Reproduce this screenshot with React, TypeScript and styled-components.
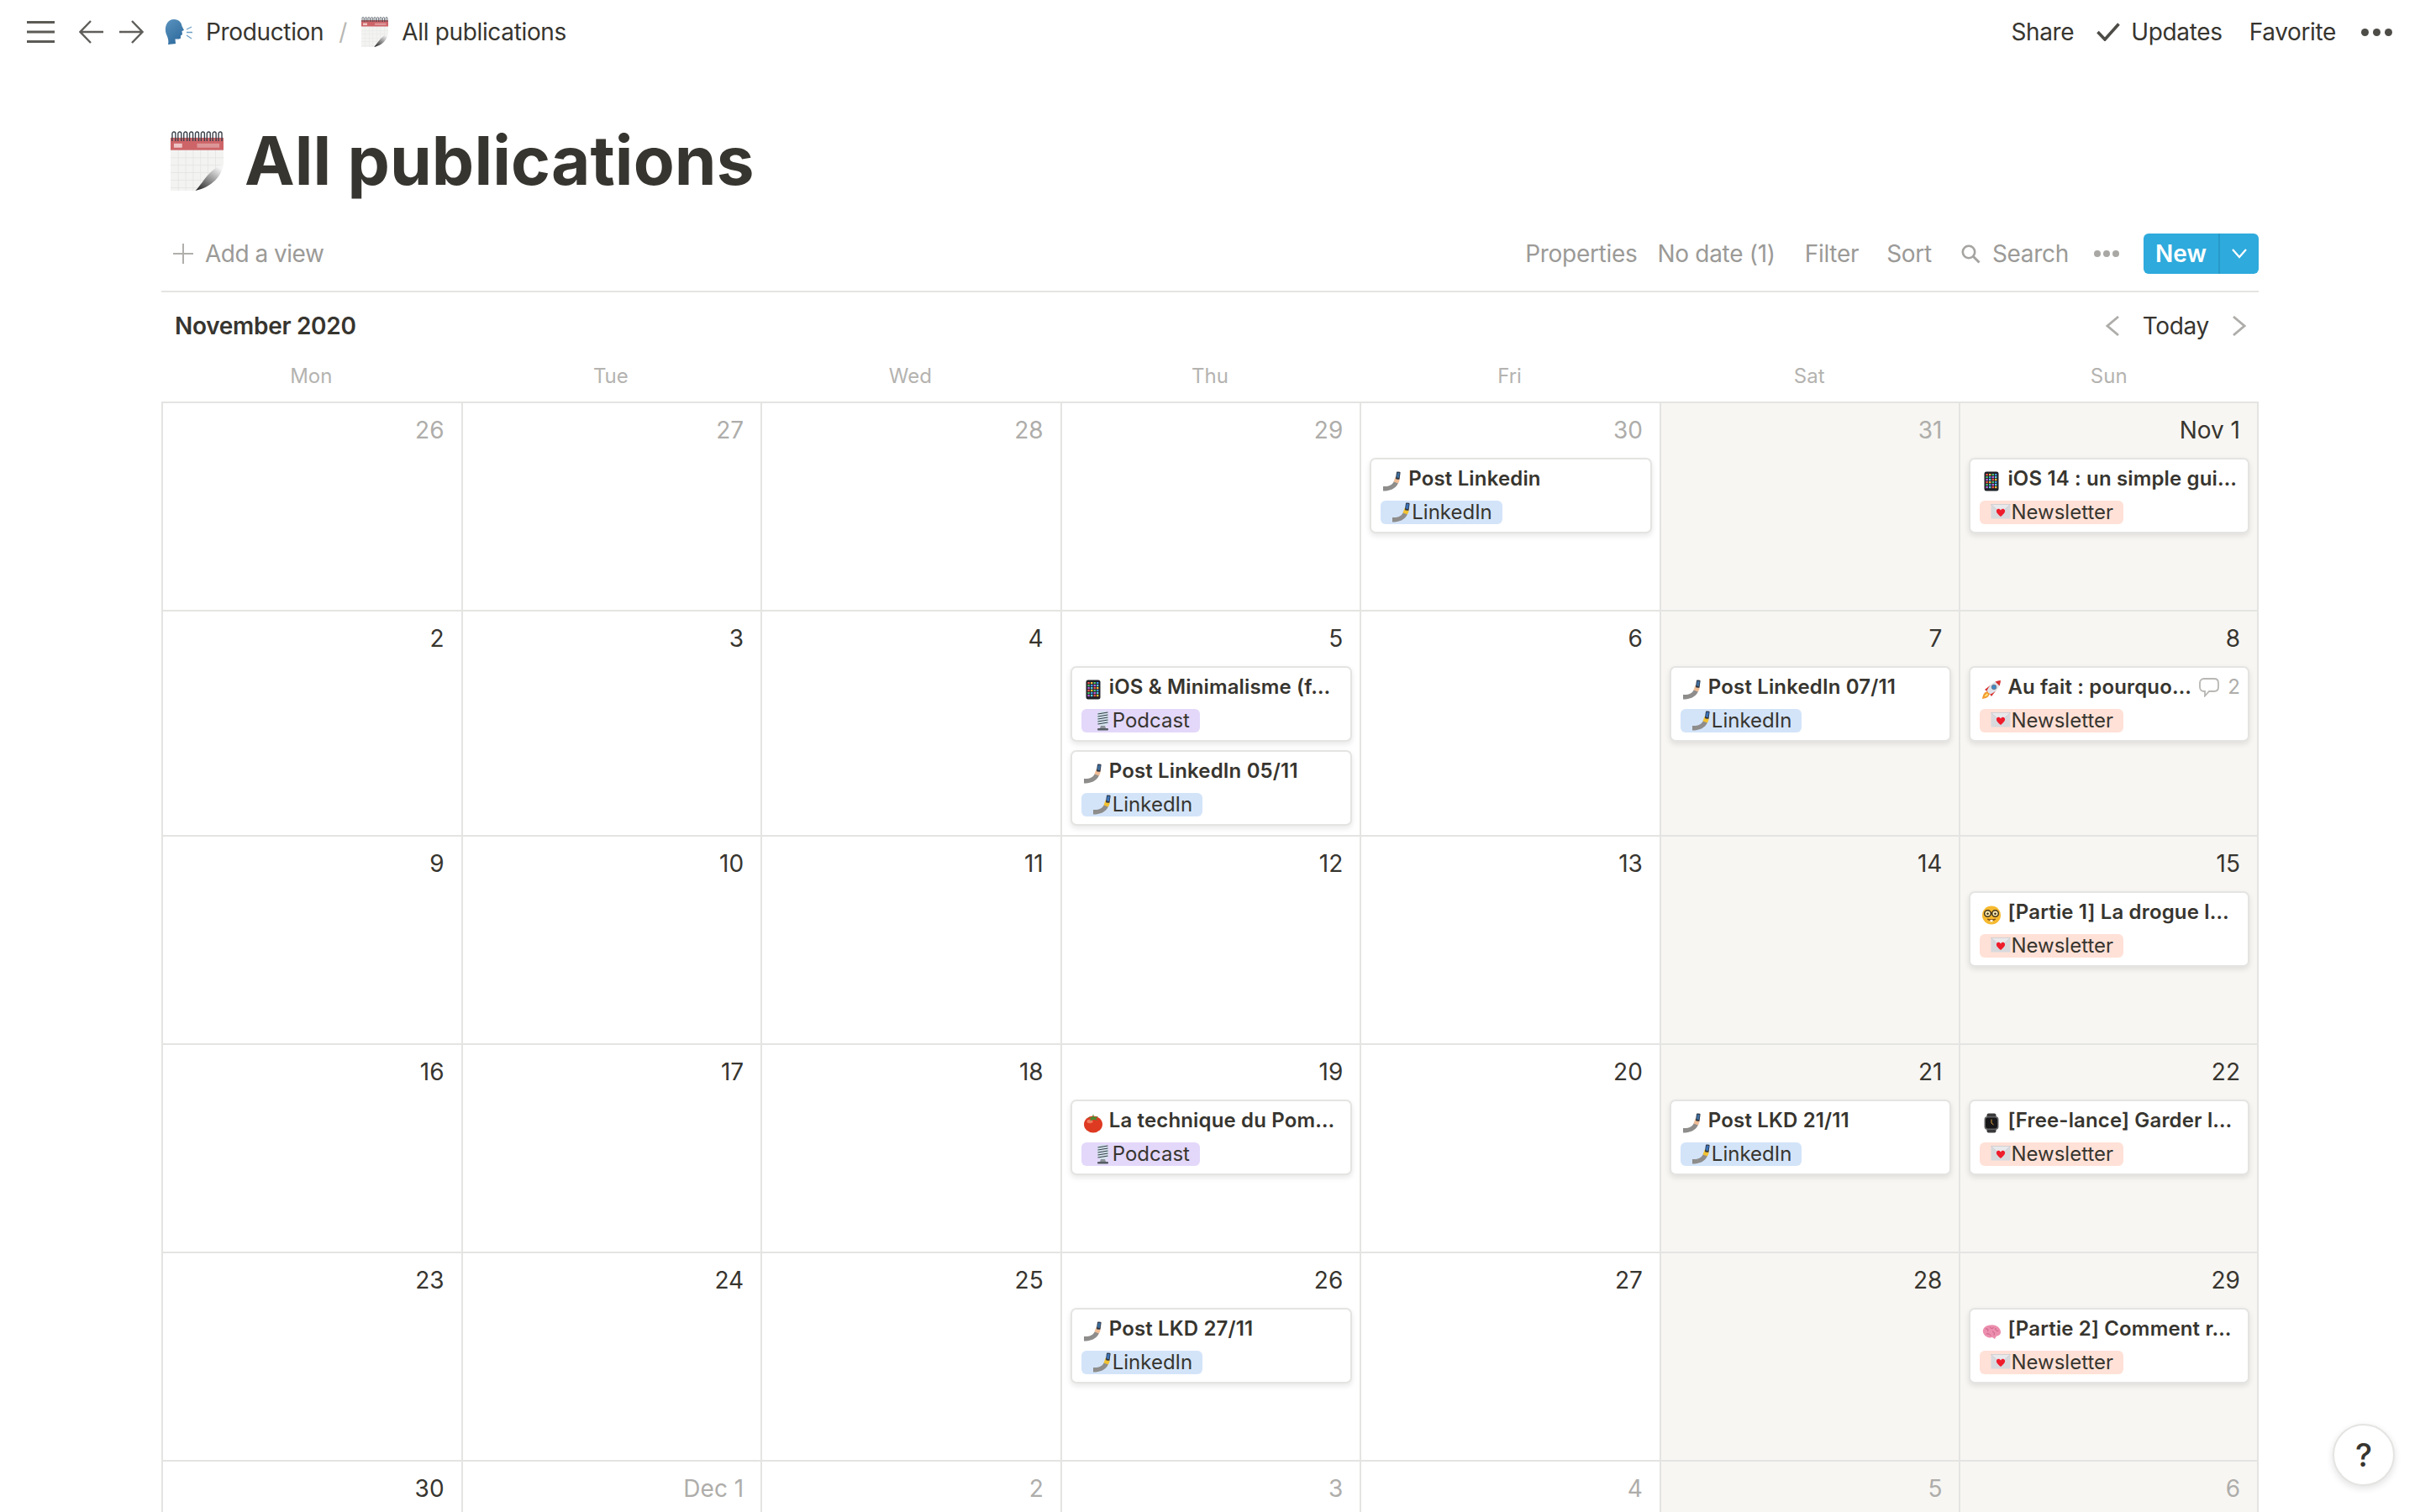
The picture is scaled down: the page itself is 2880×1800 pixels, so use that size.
import React from 'react'
import styled, { createGlobalStyle } from 'styled-components'

const GlobalStyle = createGlobalStyle`
  html, body {
    margin: 0;
    padding: 0;
    background: #fff;
    overflow: hidden;
  }
  body {
    font-family: Inter, "Liberation Sans", sans-serif;
    color: #37352f;
  }
`

// emoji drawings, the reference uses Apple emoji and no colour emoji font is installed
const CalendarEmoji: React.FC<{ width: number; height: number }> = ({ width, height }) => (
  <svg width={width} height={height} viewBox="0 0 64 72" style={{ flex: 'none' }}>
    <defs>
      <linearGradient id="curl" x1="0.1" y1="1" x2="0.8" y2="0.1">
        <stop offset="0" stopColor="#262626" />
        <stop offset="0.55" stopColor="#9a9a9a" />
        <stop offset="1" stopColor="#f4f4f4" />
      </linearGradient>
    </defs>
    <rect x="0" y="22" width="64" height="50" fill="#f3f3f2" />
    {[32, 41, 50, 59, 68].map((y) => (
      <rect key={y} x="0" y={y} width="64" height="0.7" fill="#e2e2e1" />
    ))}
    {[9, 18, 27, 36, 45, 54].map((x) => (
      <rect key={x} x={x} y="22" width="0.7" height="50" fill="#e2e2e1" />
    ))}
    <rect x="0" y="8" width="64" height="15" fill="#cd6468" />
    <rect x="4" y="15" width="10" height="5" fill="#eec5c6" />
    <rect x="32" y="15" width="27" height="5" fill="#dc9698" />
    {[4, 11, 18, 25, 32, 39, 46, 53, 60].map((x) => (
      <path key={x} d={`M${x - 2} 12 V3 a2 2 0 0 1 4 0 V12`} fill="none" stroke="#38404a" strokeWidth="1.4" />
    ))}
    <path d="M64 72 H30 C46 66 54 52 64 40 Z" fill="#fff" />
    <path d="M30 72 C40 62 46 46 64 40 C62 54 50 68 30 72 Z" fill="url(#curl)" />
  </svg>
)

const SpeakingHead = () => (
  <svg width={34} height={30} viewBox="0 0 34 30" style={{ flex: 'none' }}>
    <defs>
      <linearGradient id="head" x1="0" y1="0" x2="0.6" y2="1">
        <stop offset="0" stopColor="#5b93bf" />
        <stop offset="1" stopColor="#2f6c9e" />
      </linearGradient>
    </defs>
    <path
      d="M11 0 C17 0 20 4 20.5 8 L23 13 L20.5 14 L21 18 L19 19.5 L19 22.5 C17 24 14 23.5 12.5 23.5 L13 29 L4 30 C5 26 4 22 2 18 C-1 11 2 0 11 0 Z"
      fill="url(#head)"
    />
    <path d="M26 12 L32 9 M26 15.5 L33 15.5 M26 19 L32 23" stroke="#6d9fc6" strokeWidth="1.3" fill="none" />
  </svg>
)

const Phone = () => (
  <svg width={24} height={24} viewBox="0 0 24 24">
    <rect x="3.5" y="0.5" width="17" height="23" rx="2.5" fill="#1f2126" />
    {[3, 6, 9, 12, 15, 18].map((y, r) =>
      [5.4, 9, 12.6, 16].map((x, c) => (
        <rect
          key={`${r}-${c}`}
          x={x}
          y={y}
          width="2.4"
          height="2.2"
          fill={['#f0554e', '#f5bd3f', '#4cc474', '#4196ea', '#bd62e0', '#5accdf'][(r * 2 + c) % 6]}
        />
      )),
    )}
  </svg>
)

const SelfieArm: React.FC<{ hand?: string; phone?: string }> = ({ hand = '#eebc95', phone = '#3f6f9e' }) => (
  <svg width={24} height={24} viewBox="0 0 24 24">
    <path d="M1 23.5 V18 C6 18 11 18 14 12 L19 14 C16 21 9 23.5 1 23.5 Z" fill="#8e8d8b" />
    <path d="M13.5 12.5 L15.5 7 L17 6 L20.5 7.5 L20.5 11 L19 14.5 Z" fill={hand} />
    <rect x="16.5" y="0.5" width="4.6" height="9" rx="1" transform="rotate(8 18 5)" fill="#2d3340" />
    <rect x="17.3" y="1.6" width="3" height="6" transform="rotate(8 18 5)" fill={phone} />
  </svg>
)

const Mic = () => (
  <svg width={24} height={24} viewBox="0 0 24 24">
    <rect x="6" y="0.5" width="13" height="18" rx="5.5" fill="#d3e2ec" />
    {[3, 6, 9, 12, 15].map((y) => (
      <path key={y} d={`M6.5 ${y + 1} L18.5 ${y - 1}`} stroke="#39424c" strokeWidth="1.2" />
    ))}
    <path d="M10 18 H15 L16 21 H9 Z" fill="#8b9298" />
    <rect x="6" y="21" width="13" height="2.4" rx="1" fill="#555c62" />
  </svg>
)

const HeartMail = () => (
  <svg width={24} height={24} viewBox="0 0 24 24">
    <rect x="0.5" y="2.5" width="23" height="17" fill="#d8d9dd" />
    <path d="M0.5 2.5 L12 13 L23.5 2.5 Z" fill="#e9e9ec" stroke="#c2c3c8" strokeWidth="0.6" />
    <path
      d="M12 17 C6.5 12.5 6.5 10.5 7.3 9 C8.5 7 11 7.5 12 9.5 C13 7.5 15.5 7 16.7 9 C17.5 10.5 17.5 12.5 12 17 Z"
      fill="#ef1c2c"
    />
  </svg>
)

const Rocket = () => (
  <svg width={24} height={24} viewBox="0 0 24 24">
    <path d="M1 23 C1.5 18 3.5 15 7 14 L10 17 C9 20.5 6 22.5 1 23 Z" fill="#f2992e" />
    <path d="M3.5 20.5 C4 18.5 5.5 17 7 16.5 L8 17.5 C7.5 19 6 20 3.5 20.5 Z" fill="#ffe27a" />
    <path d="M4 12 L11 6.5 L8 15 Z M12 20 L17.5 13 L9 16 Z" fill="#d8312e" />
    <path d="M6.5 13.5 C9 7 14.5 1.8 23 1 C22.4 9.5 17 15 10.5 17.5 Z" fill="#dfe4ea" />
    <path d="M16.5 2.4 C18.8 1.6 21 1.2 23 1 C22.8 3 22.4 5.2 21.6 7.4 Z" fill="#d8312e" />
    <circle cx="15" cy="9" r="2.8" fill="#3f88c5" stroke="#76808c" strokeWidth="1" />
  </svg>
)

const Nerd = () => (
  <svg width={24} height={24} viewBox="0 0 24 24">
    <circle cx="12" cy="12.5" r="11" fill="#f6b92f" />
    <circle cx="7.5" cy="10.5" r="3.8" fill="#fdeeb6" stroke="#43331a" strokeWidth="1.5" />
    <circle cx="16.5" cy="10.5" r="3.8" fill="#fdeeb6" stroke="#43331a" strokeWidth="1.5" />
    <path d="M11 10 H13" stroke="#43331a" strokeWidth="1.5" />
    <circle cx="7.5" cy="10.8" r="1.3" fill="#3a2a12" />
    <circle cx="16.5" cy="10.8" r="1.3" fill="#3a2a12" />
    <path d="M7 17 C9 19.5 15 19.5 17 17 C14 18 10 18 7 17 Z" fill="#7a4a16" stroke="#7a4a16" strokeWidth="0.8" />
    <rect x="10.5" y="18" width="3" height="2.4" fill="#fff" />
  </svg>
)

const Watch = () => (
  <svg width={24} height={24} viewBox="0 0 24 24">
    <rect x="6.5" y="0.5" width="11" height="23" rx="2" fill="#3a3a3c" />
    <rect x="3.5" y="4" width="17" height="16" rx="4" fill="#626264" />
    <rect x="5" y="5.4" width="14" height="13.2" rx="3" fill="#17171a" />
    <path d="M12 7.5 V12 L14.5 14" stroke="#d89a3c" strokeWidth="1" fill="none" />
  </svg>
)

const Tomato = () => (
  <svg width={24} height={24} viewBox="0 0 24 24">
    <ellipse cx="12" cy="13.5" rx="11" ry="10" fill="#de3a22" />
    <ellipse cx="8" cy="10" rx="3.5" ry="2.2" fill="#f07a5e" />
    <path d="M12 1 L13 5 L18 4 L15 7 L17.5 9 L12.5 7.8 L8 9.5 L9.5 6.5 L5.5 5 L11 5 Z" fill="#4c8c33" />
  </svg>
)

const Brain = () => (
  <svg width={24} height={24} viewBox="0 0 24 24">
    <path
      d="M2 13 C1 8 6 4 11 4.5 C16 3.5 22 6.5 23 12 C23.5 15 21 17.5 18 17.5 L16 21 L13 19 C9 20.5 3.5 18.5 2 13 Z"
      fill="#ec8eae"
    />
    <path
      d="M5 9 C8 8 9 11 7 12 M10 6.5 C11 9 14 9 14.5 7 M17 8 C16 11 19 12 20.5 11 M6 15 C9 14 11 16 11 17.5 M13 12 C15 12 16 15 15 16.5"
      stroke="#c85f86"
      strokeWidth="1"
      fill="none"
    />
  </svg>
)

const MiniMenu = () => (
  <svg width={33} height={26} viewBox="0 0 33 26">
    <rect y="0" width="33" height="3" fill="#5c5b56" />
    <rect y="11.5" width="33" height="3" fill="#5c5b56" />
    <rect y="23" width="33" height="3" fill="#5c5b56" />
  </svg>
)

const ArrowIcon: React.FC<{ flip?: boolean }> = ({ flip }) => (
  <svg width={29} height={28} viewBox="0 0 29 28" style={flip ? { transform: 'scaleX(-1)' } : undefined}>
    <path d="M14 1 L1.5 14 L14 27 M2 14 H29" fill="none" stroke="#5f5e5a" strokeWidth="2.4" />
  </svg>
)

const PlusIcon = () => (
  <svg width={24} height={24} viewBox="0 0 24 24">
    <path d="M12 0 V24 M0 12 H24" stroke="#b0afac" strokeWidth="2" />
  </svg>
)

const SearchIcon = () => (
  <svg width={23} height={23} viewBox="0 0 23 23">
    <circle cx="9" cy="9" r="7.2" fill="none" stroke="#a5a4a1" strokeWidth="2.6" />
    <path d="M14 14 L21.5 21.5" stroke="#a5a4a1" strokeWidth="3" />
  </svg>
)

const CheckIcon = () => (
  <svg width={28} height={22} viewBox="0 0 28 22">
    <path d="M1.5 11 L10 20 L26.5 1.5" fill="none" stroke="#4d4c47" strokeWidth="3.6" />
  </svg>
)

const Dots: React.FC<{ wide: number; r: number; color: string }> = ({ wide, r, color }) => (
  <svg width={wide} height={r * 2} viewBox={`0 0 ${wide} ${r * 2}`}>
    <circle cx={r} cy={r} r={r} fill={color} />
    <circle cx={wide / 2} cy={r} r={r} fill={color} />
    <circle cx={wide - r} cy={r} r={r} fill={color} />
  </svg>
)

const Chevron: React.FC<{ flip?: boolean }> = ({ flip }) => (
  <svg width={16} height={24} viewBox="0 0 16 24" style={flip ? { transform: 'scaleX(-1)' } : undefined}>
    <path d="M15 1 L2 12 L15 23" fill="none" stroke="#aeadaa" strokeWidth="2.8" />
  </svg>
)

const CommentIcon = () => (
  <svg width={24} height={23} viewBox="0 0 24 23">
    <path
      d="M6 1 H18 C21 1 23 3 23 6 V11 C23 14 21 16 18 16 H12 L7 21.5 V16 H6 C3 16 1 14 1 11 V6 C1 3 3 1 6 1 Z"
      fill="none"
      stroke="#b8b7b4"
      strokeWidth="1.8"
    />
  </svg>
)

type TagKind = 'podcast' | 'linkedin' | 'newsletter'

interface Publication {
  icon: React.ReactNode
  title: string
  tag: TagKind
  comments?: number
}

interface Day {
  label: string
  muted?: boolean
  cards?: Publication[]
}

const tagInfo = {
  podcast: { label: 'Podcast', bg: '#e3d8fa', icon: <Mic /> },
  linkedin: { label: 'LinkedIn', bg: '#d3e4f9', icon: <SelfieArm hand="#f2c230" phone="#3a73b8" /> },
  newsletter: { label: 'Newsletter', bg: '#ffe1d7', icon: <HeartMail /> },
}

const weeks: Day[][] = [
  [
    { label: '26', muted: true },
    { label: '27', muted: true },
    { label: '28', muted: true },
    { label: '29', muted: true },
    { label: '30', muted: true, cards: [{ icon: <SelfieArm />, title: 'Post Linkedin', tag: 'linkedin' }] },
    { label: '31', muted: true },
    { label: 'Nov 1', cards: [{ icon: <Phone />, title: 'iOS 14 : un simple gui…', tag: 'newsletter' }] },
  ],
  [
    { label: '2' },
    { label: '3' },
    { label: '4' },
    {
      label: '5',
      cards: [
        { icon: <Phone />, title: 'iOS & Minimalisme (f…', tag: 'podcast' },
        { icon: <SelfieArm />, title: 'Post LinkedIn 05/11', tag: 'linkedin' },
      ],
    },
    { label: '6' },
    { label: '7', cards: [{ icon: <SelfieArm />, title: 'Post LinkedIn 07/11', tag: 'linkedin' }] },
    { label: '8', cards: [{ icon: <Rocket />, title: 'Au fait : pourquo…', tag: 'newsletter', comments: 2 }] },
  ],
  [
    { label: '9' },
    { label: '10' },
    { label: '11' },
    { label: '12' },
    { label: '13' },
    { label: '14' },
    { label: '15', cards: [{ icon: <Nerd />, title: '[Partie 1] La drogue l…', tag: 'newsletter' }] },
  ],
  [
    { label: '16' },
    { label: '17' },
    { label: '18' },
    { label: '19', cards: [{ icon: <Tomato />, title: 'La technique du Pom…', tag: 'podcast' }] },
    { label: '20' },
    { label: '21', cards: [{ icon: <SelfieArm />, title: 'Post LKD 21/11', tag: 'linkedin' }] },
    { label: '22', cards: [{ icon: <Watch />, title: '[Free-lance] Garder l…', tag: 'newsletter' }] },
  ],
  [
    { label: '23' },
    { label: '24' },
    { label: '25' },
    { label: '26', cards: [{ icon: <SelfieArm />, title: 'Post LKD 27/11', tag: 'linkedin' }] },
    { label: '27' },
    { label: '28' },
    { label: '29', cards: [{ icon: <Brain />, title: '[Partie 2] Comment r…', tag: 'newsletter' }] },
  ],
  [
    { label: '30' },
    { label: 'Dec 1', muted: true },
    { label: '2', muted: true },
    { label: '3', muted: true },
    { label: '4', muted: true },
    { label: '5', muted: true },
    { label: '6', muted: true },
  ],
]

const dayNames = ['Mon', 'Tue', 'Wed', 'Thu', 'Fri', 'Sat', 'Sun']

const App: React.FC = () => {
  return (
    <>
      <GlobalStyle />
      <Page>
        <TopBar>
          <TopGroup>
            <MiniMenu />
            <Spaced $left={29}>
              <ArrowIcon />
            </Spaced>
            <Spaced $left={19}>
              <ArrowIcon flip />
            </Spaced>
            <Spaced $left={25}>
              <SpeakingHead />
            </Spaced>
            <Crumb $left={15}>Production</Crumb>
            <Slash>/</Slash>
            <Spaced $left={17}>
              <CalendarEmoji width={32} height={36} />
            </Spaced>
            <Crumb $left={16}>All publications</Crumb>
          </TopGroup>
          <TopGroup>
            <Crumb>Share</Crumb>
            <Spaced $left={27}>
              <CheckIcon />
            </Spaced>
            <Crumb $left={13}>Updates</Crumb>
            <Crumb $left={32}>Favorite</Crumb>
            <Spaced $left={30}>
              <Dots wide={37} r={4.5} color="#4d4c47" />
            </Spaced>
          </TopGroup>
        </TopBar>
        <Content>
          <TitleRow>
            <CalendarEmoji width={63} height={71} />
            <Title>All publications</Title>
          </TitleRow>
          <Toolbar>
            <AddView>
              <PlusIcon />
              <span>Add a view</span>
            </AddView>
            <ToolGroup>
              <ToolItem>Properties</ToolItem>
              <ToolItem $left={24}>No date (1)</ToolItem>
              <ToolItem $left={35}>Filter</ToolItem>
              <ToolItem $left={33}>Sort</ToolItem>
              <ToolItem $left={35}>
                <SearchIcon />
                <span>Search</span>
              </ToolItem>
              <ToolItem $left={30}>
                <Dots wide={30} r={4} color="#a9a8a5" />
              </ToolItem>
              <NewButton>
                <NewLabel>New</NewLabel>
                <NewCaret>
                  <svg width={20} height={12} viewBox="0 0 20 12">
                    <path d="M2 1 L10 10 L18 1" fill="none" stroke="#fff" strokeWidth="2.2" />
                  </svg>
                </NewCaret>
              </NewButton>
            </ToolGroup>
          </Toolbar>
          <MonthRow>
            <MonthName>November 2020</MonthName>
            <MonthNav>
              <Chevron />
              <TodayLabel>Today</TodayLabel>
              <Chevron flip />
            </MonthNav>
          </MonthRow>
          <DayHeader>
            {dayNames.map((name) => (
              <DayName key={name}>{name}</DayName>
            ))}
          </DayHeader>
          <Calendar>
            {weeks.map((week, w) =>
              week.map((day, d) => (
                <Cell key={`${w}-${d}`} $weekend={d >= 5} $last={d === 6}>
                  <DateNumber $muted={day.muted}>{day.label}</DateNumber>
                  {day.cards && (
                    <CardStack>
                      {day.cards.map((card) => (
                        <Card key={card.title}>
                          <CardTitleRow>
                            <CardEmoji>{card.icon}</CardEmoji>
                            <CardTitle>{card.title}</CardTitle>
                            {card.comments && (
                              <CommentCount>
                                <CommentIcon />
                                <span>{card.comments}</span>
                              </CommentCount>
                            )}
                          </CardTitleRow>
                          <Tag $bg={tagInfo[card.tag].bg}>
                            <TagEmoji>{tagInfo[card.tag].icon}</TagEmoji>
                            {tagInfo[card.tag].label}
                          </Tag>
                        </Card>
                      ))}
                    </CardStack>
                  )}
                </Cell>
              )),
            )}
          </Calendar>
        </Content>
        <HelpButton>?</HelpButton>
      </Page>
    </>
  )
}

const Page = styled.div`
  position: relative;
  width: 2880px;
  height: 1800px;
  overflow: hidden;
  background: #fff;
`

const TopBar = styled.header`
  display: flex;
  align-items: center;
  justify-content: space-between;
  height: 76px;
  padding: 0 33px 0 32px;
  box-sizing: border-box;
`

const TopGroup = styled.div`
  display: flex;
  align-items: center;
`

const Spaced = styled.div<{ $left?: number }>`
  display: flex;
  align-items: center;
  margin-left: ${(p) => p.$left ?? 0}px;
`

const Crumb = styled.span<{ $left?: number }>`
  margin-left: ${(p) => p.$left ?? 0}px;
  font-size: 28px;
  line-height: 36px;
  letter-spacing: -0.35px;
  color: #37352f;
  white-space: nowrap;
`

const Slash = styled.span`
  margin-left: 18px;
  font-size: 28px;
  line-height: 36px;
  color: #b8b7b4;
`

const Content = styled.main`
  width: 2496px;
  margin-left: 192px;
`

const TitleRow = styled.div`
  display: flex;
  align-items: center;
  height: 100px;
  margin-top: 65px;
  padding-left: 11px;
`

const Title = styled.h1`
  margin: 0 0 0 25px;
  font-size: 80px;
  line-height: 100px;
  font-weight: 700;
  letter-spacing: 0.1px;
  color: #37352f;
  white-space: nowrap;
`

const Toolbar = styled.div`
  display: flex;
  align-items: center;
  justify-content: space-between;
  margin-top: 37px;
  padding: 0 0 20px 14px;
  border-bottom: 2px solid #e4e4e2;
`

const AddView = styled.div`
  display: flex;
  align-items: center;
  gap: 14px;
  font-size: 28px;
  line-height: 48px;
  letter-spacing: -0.5px;
  color: #9b9a97;
`

const ToolGroup = styled.div`
  display: flex;
  align-items: center;
`

const ToolItem = styled.div<{ $left?: number }>`
  display: flex;
  align-items: center;
  gap: 14px;
  margin-left: ${(p) => p.$left ?? 0}px;
  font-size: 28px;
  line-height: 48px;
  letter-spacing: -0.3px;
  color: #9b9a97;
  white-space: nowrap;
`

const NewButton = styled.div`
  display: flex;
  height: 48px;
  margin-left: 29px;
  border-radius: 6px;
  background: #2eaadc;
  overflow: hidden;
  color: #fff;
`

const NewLabel = styled.div`
  width: 91px;
  font-size: 28px;
  font-weight: 600;
  line-height: 48px;
  text-align: center;
  box-sizing: border-box;
  border-right: 2px solid #279ac9;
`

const NewCaret = styled.div`
  display: flex;
  align-items: center;
  justify-content: center;
  width: 46px;
`

const MonthRow = styled.div`
  display: flex;
  align-items: center;
  justify-content: space-between;
  height: 80px;
  padding: 0 15px 0 16px;
`

const MonthName = styled.div`
  font-size: 28px;
  font-weight: 600;
  letter-spacing: -0.3px;
  color: #37352f;
`

const MonthNav = styled.div`
  display: flex;
  align-items: center;
  gap: 28px;
`

const TodayLabel = styled.div`
  font-size: 28px;
  letter-spacing: -0.3px;
  color: #37352f;
`

const DayHeader = styled.div`
  display: grid;
  grid-template-columns: repeat(7, minmax(0, 1fr));
  height: 40px;
  margin-bottom: 10px;
`

const DayName = styled.div`
  font-size: 24px;
  line-height: 40px;
  text-align: center;
  color: #b4b3b0;
`

const Calendar = styled.div`
  display: grid;
  grid-template-columns: repeat(7, minmax(0, 1fr));
  grid-auto-rows: minmax(248px, auto);
`

const Cell = styled.div<{ $weekend: boolean; $last: boolean }>`
  box-sizing: border-box;
  min-width: 0;
  padding: 14px 0 11px;
  border-top: 2px solid #e4e4e2;
  border-left: 2px solid #e4e4e2;
  border-right: ${(p) => (p.$last ? '2px solid #e4e4e2' : '0')};
  background: ${(p) => (p.$weekend ? '#f7f6f3' : '#fff')};
`

const DateNumber = styled.div<{ $muted?: boolean }>`
  height: 36px;
  padding-right: 20px;
  font-size: 28px;
  line-height: 36px;
  text-align: right;
  color: ${(p) => (p.$muted ? '#aeadaa' : '#37352f')};
`

const CardStack = styled.div`
  display: flex;
  flex-direction: column;
  gap: 10px;
  margin-top: 15px;
  padding: 0 9px 0 10px;
`

const Card = styled.div`
  box-sizing: border-box;
  height: 90px;
  padding: 8px 9px 9px 11px;
  border: 2px solid #e4e4e2;
  border-radius: 7px;
  background: #fff;
  box-shadow: 0 3px 6px rgba(15, 15, 15, 0.1);
`

const CardTitleRow = styled.div`
  display: flex;
  align-items: center;
  height: 30px;
  padding-left: 2px;
`

const CardEmoji = styled.div`
  display: flex;
  flex: none;
  width: 24px;
  height: 24px;
  margin: 6px 7px 0 0;
`

const CardTitle = styled.div`
  flex: 1;
  min-width: 0;
  overflow: hidden;
  font-size: 24px;
  font-weight: 600;
  line-height: 30px;
  letter-spacing: 0.15px;
  white-space: nowrap;
  color: #37352f;
`

const CommentCount = styled.div`
  display: flex;
  align-items: center;
  gap: 10px;
  flex: none;
  font-size: 24px;
  line-height: 30px;
  color: #aeadaa;
`

const Tag = styled.div<{ $bg: string }>`
  display: inline-flex;
  align-items: center;
  height: 28px;
  margin-top: 11px;
  padding: 0 12px 0 13px;
  border-radius: 6px;
  background: ${(p) => p.$bg};
  font-size: 24px;
  line-height: 28px;
  color: #37352f;
`

const TagEmoji = styled.span`
  display: flex;
  width: 24px;
  height: 24px;
`

const HelpButton = styled.div`
  position: absolute;
  right: 30px;
  bottom: 31px;
  width: 74px;
  height: 74px;
  box-sizing: border-box;
  border: 2px solid #e4e4e2;
  border-radius: 50%;
  background: #fff;
  box-shadow: 0 3px 8px rgba(15, 15, 15, 0.12);
  font-size: 38px;
  font-weight: 500;
  line-height: 70px;
  text-align: center;
  color: #37352f;
`

export default App
